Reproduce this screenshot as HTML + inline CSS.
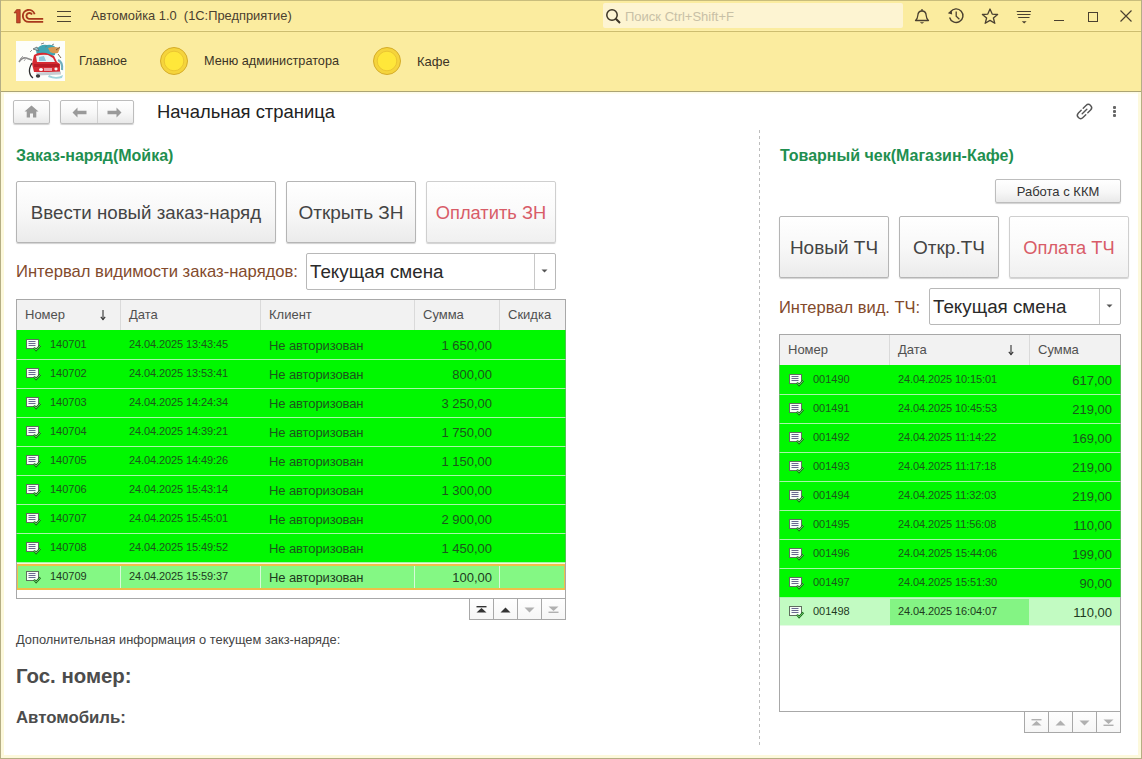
<!DOCTYPE html>
<html><head><meta charset="utf-8">
<style>
*{box-sizing:border-box;margin:0;padding:0}
html,body{width:1142px;height:759px;overflow:hidden;background:#fff;font-family:"Liberation Sans",sans-serif;color:#333}
.a{position:absolute}
.t{position:absolute;white-space:nowrap;line-height:1}
svg{position:absolute;overflow:visible}
.btn{position:absolute;border:1px solid #BDBDBD;border-radius:2px;background:linear-gradient(#FFFFFF,#F7F7F7 55%,#E9E9E9);box-shadow:0 1px 1px rgba(0,0,0,.18)}
</style></head><body>
<div class="a" style="left:0px;top:0px;width:1142px;height:31px;background:#FBEC9F"></div>
<div class="a" style="left:0px;top:30px;width:1142px;height:1px;background:#FDEFA8"></div>
<div class="a" style="left:0px;top:31px;width:1142px;height:1px;background:#CDBD70"></div>
<div class="a" style="left:0px;top:32px;width:1142px;height:59px;background:#FBEC9F"></div>
<div class="a" style="left:0px;top:91px;width:1142px;height:1px;background:#ACA474"></div>
<div class="a" style="left:0px;top:92px;width:1142px;height:2px;background:linear-gradient(#FDFBE2,#FFFEF6)"></div>
<div class="a" style="left:0px;top:0px;width:1142px;height:1px;background:#C9BD7C"></div>
<div class="a" style="left:0px;top:0px;width:1px;height:759px;background:#B5AE84"></div>
<div class="a" style="left:1141px;top:0px;width:1px;height:759px;background:#B5AE84"></div>
<div class="a" style="left:0px;top:758px;width:1142px;height:1px;background:#B5AE84"></div>
<div class="a" style="left:1px;top:92px;width:3px;height:666px;background:#FDF9DC"></div>
<div class="a" style="left:1138px;top:92px;width:3px;height:666px;background:#FDF9DC"></div>
<div class="a" style="left:1px;top:755px;width:1140px;height:3px;background:#FDF9DC"></div>
<svg style="left:10px;top:4px" width="40" height="24" viewBox="10 4 40 24">
<path d="M14 12.9 L16.6 9.6 H20.2 V22.9 H16.6 V12.9 Z" fill="#C8442A" stroke="#8E3519" stroke-width="0.7"/>
<g fill="none" stroke="#A8391C" stroke-width="1.9">
<path d="M34.6 14.2 A6 6 0 1 0 29 21.9 H43.2"/>
<path d="M32 14.4 A3 3 0 1 0 29 18.9 H43.2"/>
</g></svg>
<div class="a" style="left:57px;top:11px;width:14px;height:1px;background:#4E4430"></div>
<div class="a" style="left:57px;top:16px;width:14px;height:1px;background:#4E4430"></div>
<div class="a" style="left:57px;top:21px;width:14px;height:1px;background:#4E4430"></div>
<div class="t" style="left:91px;top:10px;font-size:12.87px;color:#4A4030;font-weight:400;">Автомойка 1.0&nbsp; (1С:Предприятие)</div>
<div class="a" style="left:603px;top:3px;width:300px;height:25px;background:#FDF4D2;border-radius:2px"></div>
<svg style="left:605px;top:8px" width="17" height="17" viewBox="0 0 17 17">
<circle cx="7" cy="7" r="5.2" fill="none" stroke="#3C3426" stroke-width="1.5"/>
<path d="M10.8 10.8 L15 15" stroke="#3C3426" stroke-width="2"/></svg>
<div class="t" style="left:625px;top:10px;font-size:13px;color:#C8C0A6;font-weight:400;">Поиск Ctrl+Shift+F</div>
<svg style="left:913px;top:8px" width="18" height="17" viewBox="0 0 18 17">
<path d="M2.5 12.5 C4 11.5 4.6 10 4.8 7.5 C5 4.5 6.8 3 9 3 C11.2 3 13 4.5 13.2 7.5 C13.4 10 14 11.5 15.5 12.5 Z" fill="none" stroke="#4A4030" stroke-width="1.3" stroke-linejoin="round"/>
<path d="M9 1 V3" stroke="#4A4030" stroke-width="1.3"/>
<path d="M6.8 14.3 H11.2 L9 15.8 Z" fill="#4A4030"/></svg>
<svg style="left:946px;top:7px" width="19" height="18" viewBox="0 0 19 18">
<path d="M4.6 4.8 A6.8 6.8 0 1 1 3.6 10.5" fill="none" stroke="#4A4030" stroke-width="1.4"/>
<path d="M1.8 6.3 L6.2 7.4 L5.6 2.9 Z" fill="#4A4030"/>
<path d="M10.2 4.6 V9.3 L13.4 12.3" fill="none" stroke="#4A4030" stroke-width="1.3"/></svg>
<svg style="left:981px;top:8px" width="18" height="17" viewBox="0 0 18 17">
<path d="M9 1 L11.2 6.1 L16.6 6.5 L12.4 10 L13.8 15.3 L9 12.4 L4.2 15.3 L5.6 10 L1.4 6.5 L6.8 6.1 Z" fill="none" stroke="#4A4030" stroke-width="1.3" stroke-linejoin="round"/></svg>
<svg style="left:1015px;top:8px" width="18" height="17" viewBox="0 0 18 17">
<path d="M1.7 3.5 H16 M2.2 6.5 H15.5 M3.2 9.5 H14.5" stroke="#4A4030" stroke-width="1.1"/>
<path d="M6.8 13.2 H11.6 L9.2 15.6 Z" fill="#4A4030"/></svg>
<div class="a" style="left:1054px;top:20px;width:10px;height:1.2px;background:#4A4030"></div>
<div class="a" style="left:1088px;top:12px;width:9.5px;height:9.5px;border:1.2px solid #4A4030"></div>
<svg style="left:1120px;top:10px" width="12" height="12" viewBox="0 0 12 12">
<path d="M0.5 0.5 L11.5 11.5 M11.5 0.5 L0.5 11.5" stroke="#4A4030" stroke-width="1.15"/></svg>
<svg style="left:16px;top:41px" width="49" height="40" viewBox="16 41 49 40">
<defs><filter id="bl" x="-10%" y="-10%" width="120%" height="120%"><feGaussianBlur stdDeviation="0.45"/></filter></defs>
<rect x="16" y="41" width="49" height="40" fill="#FDFEFB"/>
<g filter="url(#bl)">
<path d="M36 50 Q40 44 47 45 Q53 44 56 48 L55 55 Q50 57 44 55 L37 56 Z" fill="#3FA6B4"/>
<path d="M33 49 L37 47 L39 51 Z M52 45 L54 44 M41 44 L44 43" stroke="#666" stroke-width="0.8" fill="#9FCFD8"/>
<path d="M48 48 Q54 46 60 48 L58 53 Q53 54 50 52 Z" fill="#D89A52"/>
<path d="M56 50 L60 47 M58 54 L61 58" stroke="#6A5030" stroke-width="0.9"/>
<path d="M34 55 Q38 52 46 53 L54 56 L57 62 L60 64 V72 L34 72 L32 64 Z" fill="#D62A30"/>
<path d="M36 56 Q42 54 48 55 L53 58 L55 62 L37 62 Z" fill="#E8F4F8"/>
<path d="M39 57 L44 56 L46 61 L39 61 Z" fill="#8CC8DC"/>
<path d="M34 64 H59 V67 H34 Z" fill="#B81E26"/>
<ellipse cx="41" cy="69.5" rx="2" ry="1.6" fill="#FFFFFF"/>
<ellipse cx="56" cy="69" rx="1.6" ry="1.4" fill="#F4F4F4"/>
<path d="M44 68 H52 V71 H44 Z" fill="#E8A0A8"/>
<path d="M36 72.5 L61 71.5 L61 74.5 L37 75.5 Z" fill="#C8CDD2"/>
<ellipse cx="38" cy="76" rx="2.2" ry="1.8" fill="#3A3A3A"/>
<path d="M49 75 Q56 79 63 75 L62 78 Q55 80 48 77 Z" fill="#9ED4DC"/>
<path d="M58 60 Q63 62 62 70" fill="none" stroke="#6FAFBD" stroke-width="2.2"/>
<path d="M19 62 Q22 57 26 58 Q29 59 32 60" fill="none" stroke="#8C8C8C" stroke-width="1.6"/>
<path d="M20 59 L23 56 M24 61 L27 57" stroke="#A8A8A8" stroke-width="1"/>
<path d="M32 63 Q29 68 29.5 72 Q30 76 33 78" fill="none" stroke="#2E2E2E" stroke-width="1.3"/>
<path d="M30 52 L32 50 M45 47 L47 46" stroke="#777" stroke-width="0.8"/>
</g></svg>
<div class="t" style="left:79px;top:55px;font-size:12.6px;color:#3C3426;font-weight:400;">Главное</div>
<svg style="left:159px;top:45px" width="30" height="30" viewBox="0 0 30 30">
<circle cx="15" cy="16" r="13.5" fill="#F5D43C" stroke="#D5AC2A" stroke-width="1"/>
<circle cx="15" cy="16" r="9.8" fill="#FFE73A" stroke="#EBC632" stroke-width="1"/></svg>
<svg style="left:372px;top:45px" width="30" height="30" viewBox="0 0 30 30">
<circle cx="15" cy="16" r="13.5" fill="#F5D43C" stroke="#D5AC2A" stroke-width="1"/>
<circle cx="15" cy="16" r="9.8" fill="#FFE73A" stroke="#EBC632" stroke-width="1"/></svg>
<div class="t" style="left:204px;top:55px;font-size:12.7px;color:#3C3426;font-weight:400;">Меню администратора</div>
<div class="t" style="left:417px;top:55px;font-size:13px;color:#3C3426;font-weight:400;">Кафе</div>
<div class="btn" style="left:13px;top:100px;width:37px;height:24px"></div>
<svg style="left:24px;top:105px" width="15" height="13" viewBox="0 0 15 13">
<path d="M7.5 0.5 L14.5 6.5 H12.3 V12.5 H9 V8.5 H6 V12.5 H2.7 V6.5 H0.5 Z" fill="#9A9A9A"/></svg>
<div class="btn" style="left:60px;top:100px;width:74px;height:24px"></div>
<div class="a" style="left:97px;top:101px;width:1px;height:22px;background:#D0D0D0"></div>
<svg style="left:72px;top:107px" width="15" height="11" viewBox="0 0 15 11">
<path d="M0.5 5.5 L5.5 0.5 V3.8 H14.5 V7.2 H5.5 V10.5 Z" fill="#9A9A9A"/></svg>
<svg style="left:107px;top:107px" width="15" height="11" viewBox="0 0 15 11">
<path d="M14.5 5.5 L9.5 0.5 V3.8 H0.5 V7.2 H9.5 V10.5 Z" fill="#9A9A9A"/></svg>
<div class="t" style="left:157px;top:103px;font-size:18.4px;color:#222;font-weight:400;">Начальная страница</div>
<svg style="left:1076px;top:103px" width="17" height="17" viewBox="0 0 17 17">
<g fill="none" stroke="#555" stroke-width="1.4" stroke-linecap="round">
<path d="M7.2 5.2 L10 2.4 A2.6 2.6 0 0 1 14.6 7 L11.8 9.8"/>
<path d="M9.8 11.8 L7 14.6 A2.6 2.6 0 0 1 2.4 10 L5.2 7.2"/>
<path d="M6.2 10.8 L10.8 6.2"/></g></svg>
<div class="a" style="left:1113px;top:106px;width:3px;height:3px;background:#666;border-radius:1px"></div>
<div class="a" style="left:1113px;top:110px;width:3px;height:3px;background:#666;border-radius:1px"></div>
<div class="a" style="left:1113px;top:114px;width:3px;height:3px;background:#666;border-radius:1px"></div>
<div class="t" style="left:16px;top:148px;font-size:16px;color:#1F8F50;font-weight:700;">Заказ-наряд(Мойка)</div>
<div class="btn" style="left:16px;top:181px;width:260px;height:62px;background:linear-gradient(#FFFFFF,#F8F8F8 50%,#EBEBEB);border-color:#B5B5B5"></div>
<div class="t" style="left:16px;top:203.7px;width:260px;text-align:center;font-size:18.7px;color:#444">Ввести новый заказ-наряд</div>
<div class="btn" style="left:286px;top:181px;width:130px;height:62px;background:linear-gradient(#FFFFFF,#F8F8F8 50%,#EBEBEB);border-color:#B5B5B5"></div>
<div class="t" style="left:286px;top:202.5px;width:130px;text-align:center;font-size:19px;color:#444">Открыть ЗН</div>
<div class="btn" style="left:426px;top:181px;width:130px;height:62px;background:linear-gradient(#FFFFFF,#FAFAFA 50%,#F0F0F0);border-color:#CFCFCF"></div>
<div class="t" style="left:426px;top:203.8px;width:130px;text-align:center;font-size:18.3px;color:#D85C68">Оплатить ЗН</div>
<div class="t" style="left:16px;top:264px;font-size:16.6px;color:#824A2C;font-weight:400;">Интервал видимости заказ-нарядов:</div>
<div class="a" style="left:306px;top:253px;width:250px;height:37px;border:1px solid #B8B8B8;border-radius:2px;background:#fff"></div>
<div class="a" style="left:534px;top:254px;width:1px;height:35px;background:#C8C8C8"></div>
<svg style="left:541px;top:269px" width="7" height="4" viewBox="0 0 7 4"><path d="M0.5 0.5 H6.5 L3.5 3.5 Z" fill="#555"/></svg>
<div class="t" style="left:310px;top:263px;font-size:18.8px;color:#2A2A2A;font-weight:400;">Текущая смена</div>
<div class="a" style="left:16px;top:299px;width:550px;height:300px;border:1px solid #A8A8A8;background:#fff"></div>
<div class="a" style="left:17px;top:300px;width:548px;height:30px;background:#F2F2F2"></div>
<div class="t" style="left:25px;top:308px;font-size:13px;color:#505050;font-weight:400;">Номер</div>
<svg style="left:100px;top:310px" width="6" height="10" viewBox="0 0 6 10">
<path d="M3 0 V9.5" stroke="#333" stroke-width="1.1"/><path d="M0.8 6.8 L3 9.6 L5.2 6.8" fill="none" stroke="#333" stroke-width="1.1"/></svg>
<div class="a" style="left:120px;top:300px;width:1px;height:30px;background:#DADADA"></div>
<div class="t" style="left:129px;top:308px;font-size:13px;color:#505050;font-weight:400;">Дата</div>
<div class="a" style="left:260px;top:300px;width:1px;height:30px;background:#DADADA"></div>
<div class="t" style="left:269px;top:308px;font-size:13px;color:#505050;font-weight:400;">Клиент</div>
<div class="a" style="left:414px;top:300px;width:1px;height:30px;background:#DADADA"></div>
<div class="t" style="left:423px;top:308px;font-size:13px;color:#505050;font-weight:400;">Сумма</div>
<div class="a" style="left:499px;top:300px;width:1px;height:30px;background:#DADADA"></div>
<div class="t" style="left:508px;top:308px;font-size:13px;color:#505050;font-weight:400;">Скидка</div>
<div class="a" style="left:17px;top:330px;width:548px;height:29px;background:#00F800"></div>
<div class="a" style="left:16px;top:330px;width:1px;height:29px;background:#52C452"></div>
<div class="a" style="left:565px;top:330px;width:1px;height:29px;background:#52C452"></div>
<div class="a" style="left:17px;top:359px;width:548px;height:1px;background:#A8F5A8"></div>
<svg style="left:26px;top:339px" width="16" height="13" viewBox="0 0 16 13">
<rect x="0.5" y="0.5" width="12" height="9" fill="#F6FFF6" stroke="#5E6E5E" stroke-width="1"/>
<path d="M2.5 2.5 H9.5 M2.5 4.5 H9.5 M2.5 6.5 H9.5" stroke="#6A6890" stroke-width="1"/>
<path d="M8 8.6 L10.1 11 L14.3 6.6" fill="none" stroke="#1C6E1C" stroke-width="2.2"/><path d="M8 8.6 L10.1 11 L14.3 6.6" fill="none" stroke="#7ADC7A" stroke-width="0.8"/></svg>
<div class="t" style="left:50px;top:339px;font-size:11px;color:#1C561C;font-weight:400;">140701</div>
<div class="t" style="left:129px;top:339px;font-size:11px;color:#1C561C;font-weight:400;letter-spacing:-0.1px">24.04.2025 13:43:45</div>
<div class="t" style="left:269px;top:339.3px;font-size:13px;color:#1C561C;font-weight:400;letter-spacing:-0.1px">Не авторизован</div>
<div class="t" style="left:415px;top:339px;width:77px;text-align:right;font-size:13px;color:#1C561C">1 650,00</div>
<div class="t" style="left:508px;top:339.3px;font-size:13px;color:#1C561C;font-weight:400;letter-spacing:-0.1px"></div>
<div class="a" style="left:17px;top:360px;width:548px;height:28px;background:#00F800"></div>
<div class="a" style="left:16px;top:360px;width:1px;height:28px;background:#52C452"></div>
<div class="a" style="left:565px;top:360px;width:1px;height:28px;background:#52C452"></div>
<div class="a" style="left:17px;top:388px;width:548px;height:1px;background:#A8F5A8"></div>
<svg style="left:26px;top:368px" width="16" height="13" viewBox="0 0 16 13">
<rect x="0.5" y="0.5" width="12" height="9" fill="#F6FFF6" stroke="#5E6E5E" stroke-width="1"/>
<path d="M2.5 2.5 H9.5 M2.5 4.5 H9.5 M2.5 6.5 H9.5" stroke="#6A6890" stroke-width="1"/>
<path d="M8 8.6 L10.1 11 L14.3 6.6" fill="none" stroke="#1C6E1C" stroke-width="2.2"/><path d="M8 8.6 L10.1 11 L14.3 6.6" fill="none" stroke="#7ADC7A" stroke-width="0.8"/></svg>
<div class="t" style="left:50px;top:368px;font-size:11px;color:#1C561C;font-weight:400;">140702</div>
<div class="t" style="left:129px;top:368px;font-size:11px;color:#1C561C;font-weight:400;letter-spacing:-0.1px">24.04.2025 13:53:41</div>
<div class="t" style="left:269px;top:368.3px;font-size:13px;color:#1C561C;font-weight:400;letter-spacing:-0.1px">Не авторизован</div>
<div class="t" style="left:415px;top:368px;width:77px;text-align:right;font-size:13px;color:#1C561C">800,00</div>
<div class="t" style="left:508px;top:368.3px;font-size:13px;color:#1C561C;font-weight:400;letter-spacing:-0.1px"></div>
<div class="a" style="left:17px;top:389px;width:548px;height:28px;background:#00F800"></div>
<div class="a" style="left:16px;top:389px;width:1px;height:28px;background:#52C452"></div>
<div class="a" style="left:565px;top:389px;width:1px;height:28px;background:#52C452"></div>
<div class="a" style="left:17px;top:417px;width:548px;height:1px;background:#A8F5A8"></div>
<svg style="left:26px;top:397px" width="16" height="13" viewBox="0 0 16 13">
<rect x="0.5" y="0.5" width="12" height="9" fill="#F6FFF6" stroke="#5E6E5E" stroke-width="1"/>
<path d="M2.5 2.5 H9.5 M2.5 4.5 H9.5 M2.5 6.5 H9.5" stroke="#6A6890" stroke-width="1"/>
<path d="M8 8.6 L10.1 11 L14.3 6.6" fill="none" stroke="#1C6E1C" stroke-width="2.2"/><path d="M8 8.6 L10.1 11 L14.3 6.6" fill="none" stroke="#7ADC7A" stroke-width="0.8"/></svg>
<div class="t" style="left:50px;top:397px;font-size:11px;color:#1C561C;font-weight:400;">140703</div>
<div class="t" style="left:129px;top:397px;font-size:11px;color:#1C561C;font-weight:400;letter-spacing:-0.1px">24.04.2025 14:24:34</div>
<div class="t" style="left:269px;top:397.3px;font-size:13px;color:#1C561C;font-weight:400;letter-spacing:-0.1px">Не авторизован</div>
<div class="t" style="left:415px;top:397px;width:77px;text-align:right;font-size:13px;color:#1C561C">3 250,00</div>
<div class="t" style="left:508px;top:397.3px;font-size:13px;color:#1C561C;font-weight:400;letter-spacing:-0.1px"></div>
<div class="a" style="left:17px;top:418px;width:548px;height:28px;background:#00F800"></div>
<div class="a" style="left:16px;top:418px;width:1px;height:28px;background:#52C452"></div>
<div class="a" style="left:565px;top:418px;width:1px;height:28px;background:#52C452"></div>
<div class="a" style="left:17px;top:446px;width:548px;height:1px;background:#A8F5A8"></div>
<svg style="left:26px;top:426px" width="16" height="13" viewBox="0 0 16 13">
<rect x="0.5" y="0.5" width="12" height="9" fill="#F6FFF6" stroke="#5E6E5E" stroke-width="1"/>
<path d="M2.5 2.5 H9.5 M2.5 4.5 H9.5 M2.5 6.5 H9.5" stroke="#6A6890" stroke-width="1"/>
<path d="M8 8.6 L10.1 11 L14.3 6.6" fill="none" stroke="#1C6E1C" stroke-width="2.2"/><path d="M8 8.6 L10.1 11 L14.3 6.6" fill="none" stroke="#7ADC7A" stroke-width="0.8"/></svg>
<div class="t" style="left:50px;top:426px;font-size:11px;color:#1C561C;font-weight:400;">140704</div>
<div class="t" style="left:129px;top:426px;font-size:11px;color:#1C561C;font-weight:400;letter-spacing:-0.1px">24.04.2025 14:39:21</div>
<div class="t" style="left:269px;top:426.3px;font-size:13px;color:#1C561C;font-weight:400;letter-spacing:-0.1px">Не авторизован</div>
<div class="t" style="left:415px;top:426px;width:77px;text-align:right;font-size:13px;color:#1C561C">1 750,00</div>
<div class="t" style="left:508px;top:426.3px;font-size:13px;color:#1C561C;font-weight:400;letter-spacing:-0.1px"></div>
<div class="a" style="left:17px;top:447px;width:548px;height:28px;background:#00F800"></div>
<div class="a" style="left:16px;top:447px;width:1px;height:28px;background:#52C452"></div>
<div class="a" style="left:565px;top:447px;width:1px;height:28px;background:#52C452"></div>
<div class="a" style="left:17px;top:475px;width:548px;height:1px;background:#A8F5A8"></div>
<svg style="left:26px;top:455px" width="16" height="13" viewBox="0 0 16 13">
<rect x="0.5" y="0.5" width="12" height="9" fill="#F6FFF6" stroke="#5E6E5E" stroke-width="1"/>
<path d="M2.5 2.5 H9.5 M2.5 4.5 H9.5 M2.5 6.5 H9.5" stroke="#6A6890" stroke-width="1"/>
<path d="M8 8.6 L10.1 11 L14.3 6.6" fill="none" stroke="#1C6E1C" stroke-width="2.2"/><path d="M8 8.6 L10.1 11 L14.3 6.6" fill="none" stroke="#7ADC7A" stroke-width="0.8"/></svg>
<div class="t" style="left:50px;top:455px;font-size:11px;color:#1C561C;font-weight:400;">140705</div>
<div class="t" style="left:129px;top:455px;font-size:11px;color:#1C561C;font-weight:400;letter-spacing:-0.1px">24.04.2025 14:49:26</div>
<div class="t" style="left:269px;top:455.3px;font-size:13px;color:#1C561C;font-weight:400;letter-spacing:-0.1px">Не авторизован</div>
<div class="t" style="left:415px;top:455px;width:77px;text-align:right;font-size:13px;color:#1C561C">1 150,00</div>
<div class="t" style="left:508px;top:455.3px;font-size:13px;color:#1C561C;font-weight:400;letter-spacing:-0.1px"></div>
<div class="a" style="left:17px;top:476px;width:548px;height:28px;background:#00F800"></div>
<div class="a" style="left:16px;top:476px;width:1px;height:28px;background:#52C452"></div>
<div class="a" style="left:565px;top:476px;width:1px;height:28px;background:#52C452"></div>
<div class="a" style="left:17px;top:504px;width:548px;height:1px;background:#A8F5A8"></div>
<svg style="left:26px;top:484px" width="16" height="13" viewBox="0 0 16 13">
<rect x="0.5" y="0.5" width="12" height="9" fill="#F6FFF6" stroke="#5E6E5E" stroke-width="1"/>
<path d="M2.5 2.5 H9.5 M2.5 4.5 H9.5 M2.5 6.5 H9.5" stroke="#6A6890" stroke-width="1"/>
<path d="M8 8.6 L10.1 11 L14.3 6.6" fill="none" stroke="#1C6E1C" stroke-width="2.2"/><path d="M8 8.6 L10.1 11 L14.3 6.6" fill="none" stroke="#7ADC7A" stroke-width="0.8"/></svg>
<div class="t" style="left:50px;top:484px;font-size:11px;color:#1C561C;font-weight:400;">140706</div>
<div class="t" style="left:129px;top:484px;font-size:11px;color:#1C561C;font-weight:400;letter-spacing:-0.1px">24.04.2025 15:43:14</div>
<div class="t" style="left:269px;top:484.3px;font-size:13px;color:#1C561C;font-weight:400;letter-spacing:-0.1px">Не авторизован</div>
<div class="t" style="left:415px;top:484px;width:77px;text-align:right;font-size:13px;color:#1C561C">1 300,00</div>
<div class="t" style="left:508px;top:484.3px;font-size:13px;color:#1C561C;font-weight:400;letter-spacing:-0.1px"></div>
<div class="a" style="left:17px;top:505px;width:548px;height:28px;background:#00F800"></div>
<div class="a" style="left:16px;top:505px;width:1px;height:28px;background:#52C452"></div>
<div class="a" style="left:565px;top:505px;width:1px;height:28px;background:#52C452"></div>
<div class="a" style="left:17px;top:533px;width:548px;height:1px;background:#A8F5A8"></div>
<svg style="left:26px;top:513px" width="16" height="13" viewBox="0 0 16 13">
<rect x="0.5" y="0.5" width="12" height="9" fill="#F6FFF6" stroke="#5E6E5E" stroke-width="1"/>
<path d="M2.5 2.5 H9.5 M2.5 4.5 H9.5 M2.5 6.5 H9.5" stroke="#6A6890" stroke-width="1"/>
<path d="M8 8.6 L10.1 11 L14.3 6.6" fill="none" stroke="#1C6E1C" stroke-width="2.2"/><path d="M8 8.6 L10.1 11 L14.3 6.6" fill="none" stroke="#7ADC7A" stroke-width="0.8"/></svg>
<div class="t" style="left:50px;top:513px;font-size:11px;color:#1C561C;font-weight:400;">140707</div>
<div class="t" style="left:129px;top:513px;font-size:11px;color:#1C561C;font-weight:400;letter-spacing:-0.1px">24.04.2025 15:45:01</div>
<div class="t" style="left:269px;top:513.3px;font-size:13px;color:#1C561C;font-weight:400;letter-spacing:-0.1px">Не авторизован</div>
<div class="t" style="left:415px;top:513px;width:77px;text-align:right;font-size:13px;color:#1C561C">2 900,00</div>
<div class="t" style="left:508px;top:513.3px;font-size:13px;color:#1C561C;font-weight:400;letter-spacing:-0.1px"></div>
<div class="a" style="left:17px;top:534px;width:548px;height:28px;background:#00F800"></div>
<div class="a" style="left:16px;top:534px;width:1px;height:28px;background:#52C452"></div>
<div class="a" style="left:565px;top:534px;width:1px;height:28px;background:#52C452"></div>
<div class="a" style="left:17px;top:562px;width:548px;height:1px;background:#A8F5A8"></div>
<svg style="left:26px;top:542px" width="16" height="13" viewBox="0 0 16 13">
<rect x="0.5" y="0.5" width="12" height="9" fill="#F6FFF6" stroke="#5E6E5E" stroke-width="1"/>
<path d="M2.5 2.5 H9.5 M2.5 4.5 H9.5 M2.5 6.5 H9.5" stroke="#6A6890" stroke-width="1"/>
<path d="M8 8.6 L10.1 11 L14.3 6.6" fill="none" stroke="#1C6E1C" stroke-width="2.2"/><path d="M8 8.6 L10.1 11 L14.3 6.6" fill="none" stroke="#7ADC7A" stroke-width="0.8"/></svg>
<div class="t" style="left:50px;top:542px;font-size:11px;color:#1C561C;font-weight:400;">140708</div>
<div class="t" style="left:129px;top:542px;font-size:11px;color:#1C561C;font-weight:400;letter-spacing:-0.1px">24.04.2025 15:49:52</div>
<div class="t" style="left:269px;top:542.3px;font-size:13px;color:#1C561C;font-weight:400;letter-spacing:-0.1px">Не авторизован</div>
<div class="t" style="left:415px;top:542px;width:77px;text-align:right;font-size:13px;color:#1C561C">1 450,00</div>
<div class="t" style="left:508px;top:542.3px;font-size:13px;color:#1C561C;font-weight:400;letter-spacing:-0.1px"></div>
<div class="a" style="left:17px;top:563px;width:548px;height:1px;background:#F4F8D8"></div>
<div class="a" style="left:17px;top:564px;width:548px;height:26px;background:#84F884;border:2px solid #EEC048;border-left-width:1.5px;border-right-width:1.5px"></div>
<div class="a" style="left:120px;top:566px;width:1px;height:22px;background:#D8FAD8"></div>
<div class="a" style="left:260px;top:566px;width:1px;height:22px;background:#D8FAD8"></div>
<div class="a" style="left:414px;top:566px;width:1px;height:22px;background:#D8FAD8"></div>
<div class="a" style="left:499px;top:566px;width:1px;height:22px;background:#D8FAD8"></div>
<svg style="left:26px;top:571px" width="16" height="13" viewBox="0 0 16 13">
<rect x="0.5" y="0.5" width="12" height="9" fill="#F6FFF6" stroke="#5E6E5E" stroke-width="1"/>
<path d="M2.5 2.5 H9.5 M2.5 4.5 H9.5 M2.5 6.5 H9.5" stroke="#6A6890" stroke-width="1"/>
<path d="M8 8.6 L10.1 11 L14.3 6.6" fill="none" stroke="#1C6E1C" stroke-width="2.2"/><path d="M8 8.6 L10.1 11 L14.3 6.6" fill="none" stroke="#7ADC7A" stroke-width="0.8"/></svg>
<div class="t" style="left:50px;top:571px;font-size:11px;color:#1E3A1E;font-weight:400;">140709</div>
<div class="t" style="left:129px;top:571px;font-size:11px;color:#1E3A1E;font-weight:400;letter-spacing:-0.1px">24.04.2025 15:59:37</div>
<div class="t" style="left:269px;top:571.3px;font-size:13px;color:#1E3A1E;font-weight:400;letter-spacing:-0.1px">Не авторизован</div>
<div class="t" style="left:415px;top:571px;width:77px;text-align:right;font-size:13px;color:#1E3A1E">100,00</div>
<div class="t" style="left:508px;top:571.3px;font-size:13px;color:#1E3A1E;font-weight:400;letter-spacing:-0.1px"></div>
<div class="a" style="left:469px;top:599px;width:97px;height:21px;border:1px solid #A8A8A8;border-top:none;background:linear-gradient(#FEFEFE,#F6F6F6)"></div>
<div class="a" style="left:493px;top:599px;width:1px;height:20px;background:#A8A8A8"></div>
<div class="a" style="left:517px;top:599px;width:1px;height:20px;background:#A8A8A8"></div>
<div class="a" style="left:541px;top:599px;width:1px;height:20px;background:#A8A8A8"></div>
<svg style="left:476px;top:606px" width="11" height="7" viewBox="0 0 11 7"><rect x="0.5" y="0" width="10" height="1.4" fill="#333"/><path d="M0.5 6.5 L5.5 2 L10.5 6.5 Z" fill="#333"/></svg>
<svg style="left:500px;top:607px" width="11" height="6" viewBox="0 0 11 6"><path d="M0.5 5.5 L5.5 0.5 L10.5 5.5 Z" fill="#333"/></svg>
<svg style="left:524px;top:607px" width="11" height="6" viewBox="0 0 11 6"><path d="M0.5 0.5 L5.5 5.5 L10.5 0.5 Z" fill="#B0B0B0"/></svg>
<svg style="left:548px;top:606px" width="11" height="7" viewBox="0 0 11 7"><path d="M0.5 0.5 L5.5 5 L10.5 0.5 Z" fill="#B0B0B0"/><rect x="0.5" y="5.6" width="10" height="1.4" fill="#B0B0B0"/></svg>
<div class="t" style="left:16px;top:634px;font-size:12.85px;color:#444;font-weight:400;">Дополнительная информация о текущем закз-наряде:</div>
<div class="t" style="left:16px;top:666px;font-size:20.4px;color:#4C4C4C;font-weight:700;">Гос. номер:</div>
<div class="t" style="left:16px;top:709.5px;font-size:16.8px;color:#4C4C4C;font-weight:700;">Автомобиль:</div>
<div class="a" style="left:759px;top:130px;width:1px;height:618px;background:repeating-linear-gradient(to bottom,#BDBDBD 0 3px,transparent 3px 6px)"></div>
<div class="t" style="left:780px;top:148px;font-size:16px;color:#1F8F50;font-weight:700;">Товарный чек(Магазин-Кафе)</div>
<div class="btn" style="left:995px;top:179px;width:126px;height:24px"></div>
<div class="t" style="left:995px;top:185px;width:126px;text-align:center;font-size:13px;color:#333">Работа с ККМ</div>
<div class="btn" style="left:779px;top:216px;width:110px;height:62px;background:linear-gradient(#FFFFFF,#F8F8F8 50%,#EBEBEB);border-color:#B5B5B5"></div>
<div class="t" style="left:779px;top:237.5px;width:110px;text-align:center;font-size:19px;color:#444">Новый ТЧ</div>
<div class="btn" style="left:899px;top:216px;width:100px;height:62px;background:linear-gradient(#FFFFFF,#F8F8F8 50%,#EBEBEB);border-color:#B5B5B5"></div>
<div class="t" style="left:899px;top:237.5px;width:100px;text-align:center;font-size:19px;color:#444">Откр.ТЧ</div>
<div class="btn" style="left:1009px;top:216px;width:120px;height:62px;background:linear-gradient(#FFFFFF,#FAFAFA 50%,#F0F0F0);border-color:#CFCFCF"></div>
<div class="t" style="left:1009px;top:238.8px;width:120px;text-align:center;font-size:18.3px;color:#D85C68">Оплата ТЧ</div>
<div class="t" style="left:779px;top:299px;font-size:16.5px;color:#824A2C;font-weight:400;">Интервал вид. ТЧ:</div>
<div class="a" style="left:929px;top:288px;width:192px;height:37px;border:1px solid #B8B8B8;border-radius:2px;background:#fff"></div>
<div class="a" style="left:1099px;top:289px;width:1px;height:35px;background:#C8C8C8"></div>
<svg style="left:1106px;top:304px" width="7" height="4" viewBox="0 0 7 4"><path d="M0.5 0.5 H6.5 L3.5 3.5 Z" fill="#555"/></svg>
<div class="t" style="left:933px;top:298px;font-size:18.8px;color:#2A2A2A;font-weight:400;">Текущая смена</div>
<div class="a" style="left:779px;top:334px;width:342px;height:378px;border:1px solid #A8A8A8;background:#fff"></div>
<div class="a" style="left:780px;top:335px;width:340px;height:30px;background:#F2F2F2"></div>
<div class="t" style="left:788px;top:343px;font-size:13px;color:#505050;font-weight:400;">Номер</div>
<div class="a" style="left:889px;top:335px;width:1px;height:30px;background:#DADADA"></div>
<div class="t" style="left:898px;top:343px;font-size:13px;color:#505050;font-weight:400;">Дата</div>
<svg style="left:1008px;top:345px" width="6" height="10" viewBox="0 0 6 10">
<path d="M3 0 V9.5" stroke="#333" stroke-width="1.1"/><path d="M0.8 6.8 L3 9.6 L5.2 6.8" fill="none" stroke="#333" stroke-width="1.1"/></svg>
<div class="a" style="left:1029px;top:335px;width:1px;height:30px;background:#DADADA"></div>
<div class="t" style="left:1038px;top:343px;font-size:13px;color:#505050;font-weight:400;">Сумма</div>
<div class="a" style="left:780px;top:365px;width:340px;height:29px;background:#00F800"></div>
<div class="a" style="left:779px;top:365px;width:1px;height:29px;background:#52C452"></div>
<div class="a" style="left:1120px;top:365px;width:1px;height:29px;background:#52C452"></div>
<div class="a" style="left:780px;top:394px;width:340px;height:1px;background:#A8F5A8"></div>
<svg style="left:789px;top:374px" width="16" height="13" viewBox="0 0 16 13">
<rect x="0.5" y="0.5" width="12" height="9" fill="#F6FFF6" stroke="#5E6E5E" stroke-width="1"/>
<path d="M2.5 2.5 H9.5 M2.5 4.5 H9.5 M2.5 6.5 H9.5" stroke="#6A6890" stroke-width="1"/>
<path d="M8 8.6 L10.1 11 L14.3 6.6" fill="none" stroke="#1C6E1C" stroke-width="2.2"/><path d="M8 8.6 L10.1 11 L14.3 6.6" fill="none" stroke="#7ADC7A" stroke-width="0.8"/></svg>
<div class="t" style="left:813px;top:374px;font-size:11px;color:#1C561C;font-weight:400;">001490</div>
<div class="t" style="left:898px;top:374px;font-size:11px;color:#1C561C;font-weight:400;letter-spacing:-0.1px">24.04.2025 10:15:01</div>
<div class="t" style="left:1030px;top:374px;width:82px;text-align:right;font-size:13px;color:#1C561C">617,00</div>
<div class="a" style="left:780px;top:395px;width:340px;height:28px;background:#00F800"></div>
<div class="a" style="left:779px;top:395px;width:1px;height:28px;background:#52C452"></div>
<div class="a" style="left:1120px;top:395px;width:1px;height:28px;background:#52C452"></div>
<div class="a" style="left:780px;top:423px;width:340px;height:1px;background:#A8F5A8"></div>
<svg style="left:789px;top:403px" width="16" height="13" viewBox="0 0 16 13">
<rect x="0.5" y="0.5" width="12" height="9" fill="#F6FFF6" stroke="#5E6E5E" stroke-width="1"/>
<path d="M2.5 2.5 H9.5 M2.5 4.5 H9.5 M2.5 6.5 H9.5" stroke="#6A6890" stroke-width="1"/>
<path d="M8 8.6 L10.1 11 L14.3 6.6" fill="none" stroke="#1C6E1C" stroke-width="2.2"/><path d="M8 8.6 L10.1 11 L14.3 6.6" fill="none" stroke="#7ADC7A" stroke-width="0.8"/></svg>
<div class="t" style="left:813px;top:403px;font-size:11px;color:#1C561C;font-weight:400;">001491</div>
<div class="t" style="left:898px;top:403px;font-size:11px;color:#1C561C;font-weight:400;letter-spacing:-0.1px">24.04.2025 10:45:53</div>
<div class="t" style="left:1030px;top:403px;width:82px;text-align:right;font-size:13px;color:#1C561C">219,00</div>
<div class="a" style="left:780px;top:424px;width:340px;height:28px;background:#00F800"></div>
<div class="a" style="left:779px;top:424px;width:1px;height:28px;background:#52C452"></div>
<div class="a" style="left:1120px;top:424px;width:1px;height:28px;background:#52C452"></div>
<div class="a" style="left:780px;top:452px;width:340px;height:1px;background:#A8F5A8"></div>
<svg style="left:789px;top:432px" width="16" height="13" viewBox="0 0 16 13">
<rect x="0.5" y="0.5" width="12" height="9" fill="#F6FFF6" stroke="#5E6E5E" stroke-width="1"/>
<path d="M2.5 2.5 H9.5 M2.5 4.5 H9.5 M2.5 6.5 H9.5" stroke="#6A6890" stroke-width="1"/>
<path d="M8 8.6 L10.1 11 L14.3 6.6" fill="none" stroke="#1C6E1C" stroke-width="2.2"/><path d="M8 8.6 L10.1 11 L14.3 6.6" fill="none" stroke="#7ADC7A" stroke-width="0.8"/></svg>
<div class="t" style="left:813px;top:432px;font-size:11px;color:#1C561C;font-weight:400;">001492</div>
<div class="t" style="left:898px;top:432px;font-size:11px;color:#1C561C;font-weight:400;letter-spacing:-0.1px">24.04.2025 11:14:22</div>
<div class="t" style="left:1030px;top:432px;width:82px;text-align:right;font-size:13px;color:#1C561C">169,00</div>
<div class="a" style="left:780px;top:453px;width:340px;height:28px;background:#00F800"></div>
<div class="a" style="left:779px;top:453px;width:1px;height:28px;background:#52C452"></div>
<div class="a" style="left:1120px;top:453px;width:1px;height:28px;background:#52C452"></div>
<div class="a" style="left:780px;top:481px;width:340px;height:1px;background:#A8F5A8"></div>
<svg style="left:789px;top:461px" width="16" height="13" viewBox="0 0 16 13">
<rect x="0.5" y="0.5" width="12" height="9" fill="#F6FFF6" stroke="#5E6E5E" stroke-width="1"/>
<path d="M2.5 2.5 H9.5 M2.5 4.5 H9.5 M2.5 6.5 H9.5" stroke="#6A6890" stroke-width="1"/>
<path d="M8 8.6 L10.1 11 L14.3 6.6" fill="none" stroke="#1C6E1C" stroke-width="2.2"/><path d="M8 8.6 L10.1 11 L14.3 6.6" fill="none" stroke="#7ADC7A" stroke-width="0.8"/></svg>
<div class="t" style="left:813px;top:461px;font-size:11px;color:#1C561C;font-weight:400;">001493</div>
<div class="t" style="left:898px;top:461px;font-size:11px;color:#1C561C;font-weight:400;letter-spacing:-0.1px">24.04.2025 11:17:18</div>
<div class="t" style="left:1030px;top:461px;width:82px;text-align:right;font-size:13px;color:#1C561C">219,00</div>
<div class="a" style="left:780px;top:482px;width:340px;height:28px;background:#00F800"></div>
<div class="a" style="left:779px;top:482px;width:1px;height:28px;background:#52C452"></div>
<div class="a" style="left:1120px;top:482px;width:1px;height:28px;background:#52C452"></div>
<div class="a" style="left:780px;top:510px;width:340px;height:1px;background:#A8F5A8"></div>
<svg style="left:789px;top:490px" width="16" height="13" viewBox="0 0 16 13">
<rect x="0.5" y="0.5" width="12" height="9" fill="#F6FFF6" stroke="#5E6E5E" stroke-width="1"/>
<path d="M2.5 2.5 H9.5 M2.5 4.5 H9.5 M2.5 6.5 H9.5" stroke="#6A6890" stroke-width="1"/>
<path d="M8 8.6 L10.1 11 L14.3 6.6" fill="none" stroke="#1C6E1C" stroke-width="2.2"/><path d="M8 8.6 L10.1 11 L14.3 6.6" fill="none" stroke="#7ADC7A" stroke-width="0.8"/></svg>
<div class="t" style="left:813px;top:490px;font-size:11px;color:#1C561C;font-weight:400;">001494</div>
<div class="t" style="left:898px;top:490px;font-size:11px;color:#1C561C;font-weight:400;letter-spacing:-0.1px">24.04.2025 11:32:03</div>
<div class="t" style="left:1030px;top:490px;width:82px;text-align:right;font-size:13px;color:#1C561C">219,00</div>
<div class="a" style="left:780px;top:511px;width:340px;height:28px;background:#00F800"></div>
<div class="a" style="left:779px;top:511px;width:1px;height:28px;background:#52C452"></div>
<div class="a" style="left:1120px;top:511px;width:1px;height:28px;background:#52C452"></div>
<div class="a" style="left:780px;top:539px;width:340px;height:1px;background:#A8F5A8"></div>
<svg style="left:789px;top:519px" width="16" height="13" viewBox="0 0 16 13">
<rect x="0.5" y="0.5" width="12" height="9" fill="#F6FFF6" stroke="#5E6E5E" stroke-width="1"/>
<path d="M2.5 2.5 H9.5 M2.5 4.5 H9.5 M2.5 6.5 H9.5" stroke="#6A6890" stroke-width="1"/>
<path d="M8 8.6 L10.1 11 L14.3 6.6" fill="none" stroke="#1C6E1C" stroke-width="2.2"/><path d="M8 8.6 L10.1 11 L14.3 6.6" fill="none" stroke="#7ADC7A" stroke-width="0.8"/></svg>
<div class="t" style="left:813px;top:519px;font-size:11px;color:#1C561C;font-weight:400;">001495</div>
<div class="t" style="left:898px;top:519px;font-size:11px;color:#1C561C;font-weight:400;letter-spacing:-0.1px">24.04.2025 11:56:08</div>
<div class="t" style="left:1030px;top:519px;width:82px;text-align:right;font-size:13px;color:#1C561C">110,00</div>
<div class="a" style="left:780px;top:540px;width:340px;height:28px;background:#00F800"></div>
<div class="a" style="left:779px;top:540px;width:1px;height:28px;background:#52C452"></div>
<div class="a" style="left:1120px;top:540px;width:1px;height:28px;background:#52C452"></div>
<div class="a" style="left:780px;top:568px;width:340px;height:1px;background:#A8F5A8"></div>
<svg style="left:789px;top:548px" width="16" height="13" viewBox="0 0 16 13">
<rect x="0.5" y="0.5" width="12" height="9" fill="#F6FFF6" stroke="#5E6E5E" stroke-width="1"/>
<path d="M2.5 2.5 H9.5 M2.5 4.5 H9.5 M2.5 6.5 H9.5" stroke="#6A6890" stroke-width="1"/>
<path d="M8 8.6 L10.1 11 L14.3 6.6" fill="none" stroke="#1C6E1C" stroke-width="2.2"/><path d="M8 8.6 L10.1 11 L14.3 6.6" fill="none" stroke="#7ADC7A" stroke-width="0.8"/></svg>
<div class="t" style="left:813px;top:548px;font-size:11px;color:#1C561C;font-weight:400;">001496</div>
<div class="t" style="left:898px;top:548px;font-size:11px;color:#1C561C;font-weight:400;letter-spacing:-0.1px">24.04.2025 15:44:06</div>
<div class="t" style="left:1030px;top:548px;width:82px;text-align:right;font-size:13px;color:#1C561C">199,00</div>
<div class="a" style="left:780px;top:569px;width:340px;height:28px;background:#00F800"></div>
<div class="a" style="left:779px;top:569px;width:1px;height:28px;background:#52C452"></div>
<div class="a" style="left:1120px;top:569px;width:1px;height:28px;background:#52C452"></div>
<div class="a" style="left:780px;top:597px;width:340px;height:1px;background:#A8F5A8"></div>
<svg style="left:789px;top:577px" width="16" height="13" viewBox="0 0 16 13">
<rect x="0.5" y="0.5" width="12" height="9" fill="#F6FFF6" stroke="#5E6E5E" stroke-width="1"/>
<path d="M2.5 2.5 H9.5 M2.5 4.5 H9.5 M2.5 6.5 H9.5" stroke="#6A6890" stroke-width="1"/>
<path d="M8 8.6 L10.1 11 L14.3 6.6" fill="none" stroke="#1C6E1C" stroke-width="2.2"/><path d="M8 8.6 L10.1 11 L14.3 6.6" fill="none" stroke="#7ADC7A" stroke-width="0.8"/></svg>
<div class="t" style="left:813px;top:577px;font-size:11px;color:#1C561C;font-weight:400;">001497</div>
<div class="t" style="left:898px;top:577px;font-size:11px;color:#1C561C;font-weight:400;letter-spacing:-0.1px">24.04.2025 15:51:30</div>
<div class="t" style="left:1030px;top:577px;width:82px;text-align:right;font-size:13px;color:#1C561C">90,00</div>
<div class="a" style="left:780px;top:598px;width:340px;height:27px;background:#C2FBC2"></div>
<div class="a" style="left:780px;top:625px;width:340px;height:1px;background:#E4FAE4"></div>
<div class="a" style="left:890px;top:599px;width:139px;height:26px;background:#84F484"></div>
<svg style="left:789px;top:606px" width="16" height="13" viewBox="0 0 16 13">
<rect x="0.5" y="0.5" width="12" height="9" fill="#F6FFF6" stroke="#5E6E5E" stroke-width="1"/>
<path d="M2.5 2.5 H9.5 M2.5 4.5 H9.5 M2.5 6.5 H9.5" stroke="#6A6890" stroke-width="1"/>
<path d="M8 8.6 L10.1 11 L14.3 6.6" fill="none" stroke="#1C6E1C" stroke-width="2.2"/><path d="M8 8.6 L10.1 11 L14.3 6.6" fill="none" stroke="#7ADC7A" stroke-width="0.8"/></svg>
<div class="t" style="left:813px;top:606px;font-size:11px;color:#1E3A1E;font-weight:400;">001498</div>
<div class="t" style="left:898px;top:606px;font-size:11px;color:#1E3A1E;font-weight:400;letter-spacing:-0.1px">24.04.2025 16:04:07</div>
<div class="t" style="left:1030px;top:606px;width:82px;text-align:right;font-size:13px;color:#1E3A1E">110,00</div>
<div class="a" style="left:1024px;top:712px;width:97px;height:21px;border:1px solid #A8A8A8;border-top:none;background:linear-gradient(#FEFEFE,#F6F6F6)"></div>
<div class="a" style="left:1048px;top:712px;width:1px;height:20px;background:#A8A8A8"></div>
<div class="a" style="left:1072px;top:712px;width:1px;height:20px;background:#A8A8A8"></div>
<div class="a" style="left:1096px;top:712px;width:1px;height:20px;background:#A8A8A8"></div>
<svg style="left:1031px;top:719px" width="11" height="7" viewBox="0 0 11 7"><rect x="0.5" y="0" width="10" height="1.4" fill="#B0B0B0"/><path d="M0.5 6.5 L5.5 2 L10.5 6.5 Z" fill="#B0B0B0"/></svg>
<svg style="left:1055px;top:720px" width="11" height="6" viewBox="0 0 11 6"><path d="M0.5 5.5 L5.5 0.5 L10.5 5.5 Z" fill="#B0B0B0"/></svg>
<svg style="left:1079px;top:720px" width="11" height="6" viewBox="0 0 11 6"><path d="M0.5 0.5 L5.5 5.5 L10.5 0.5 Z" fill="#B0B0B0"/></svg>
<svg style="left:1103px;top:719px" width="11" height="7" viewBox="0 0 11 7"><path d="M0.5 0.5 L5.5 5 L10.5 0.5 Z" fill="#B0B0B0"/><rect x="0.5" y="5.6" width="10" height="1.4" fill="#B0B0B0"/></svg>
</body></html>
